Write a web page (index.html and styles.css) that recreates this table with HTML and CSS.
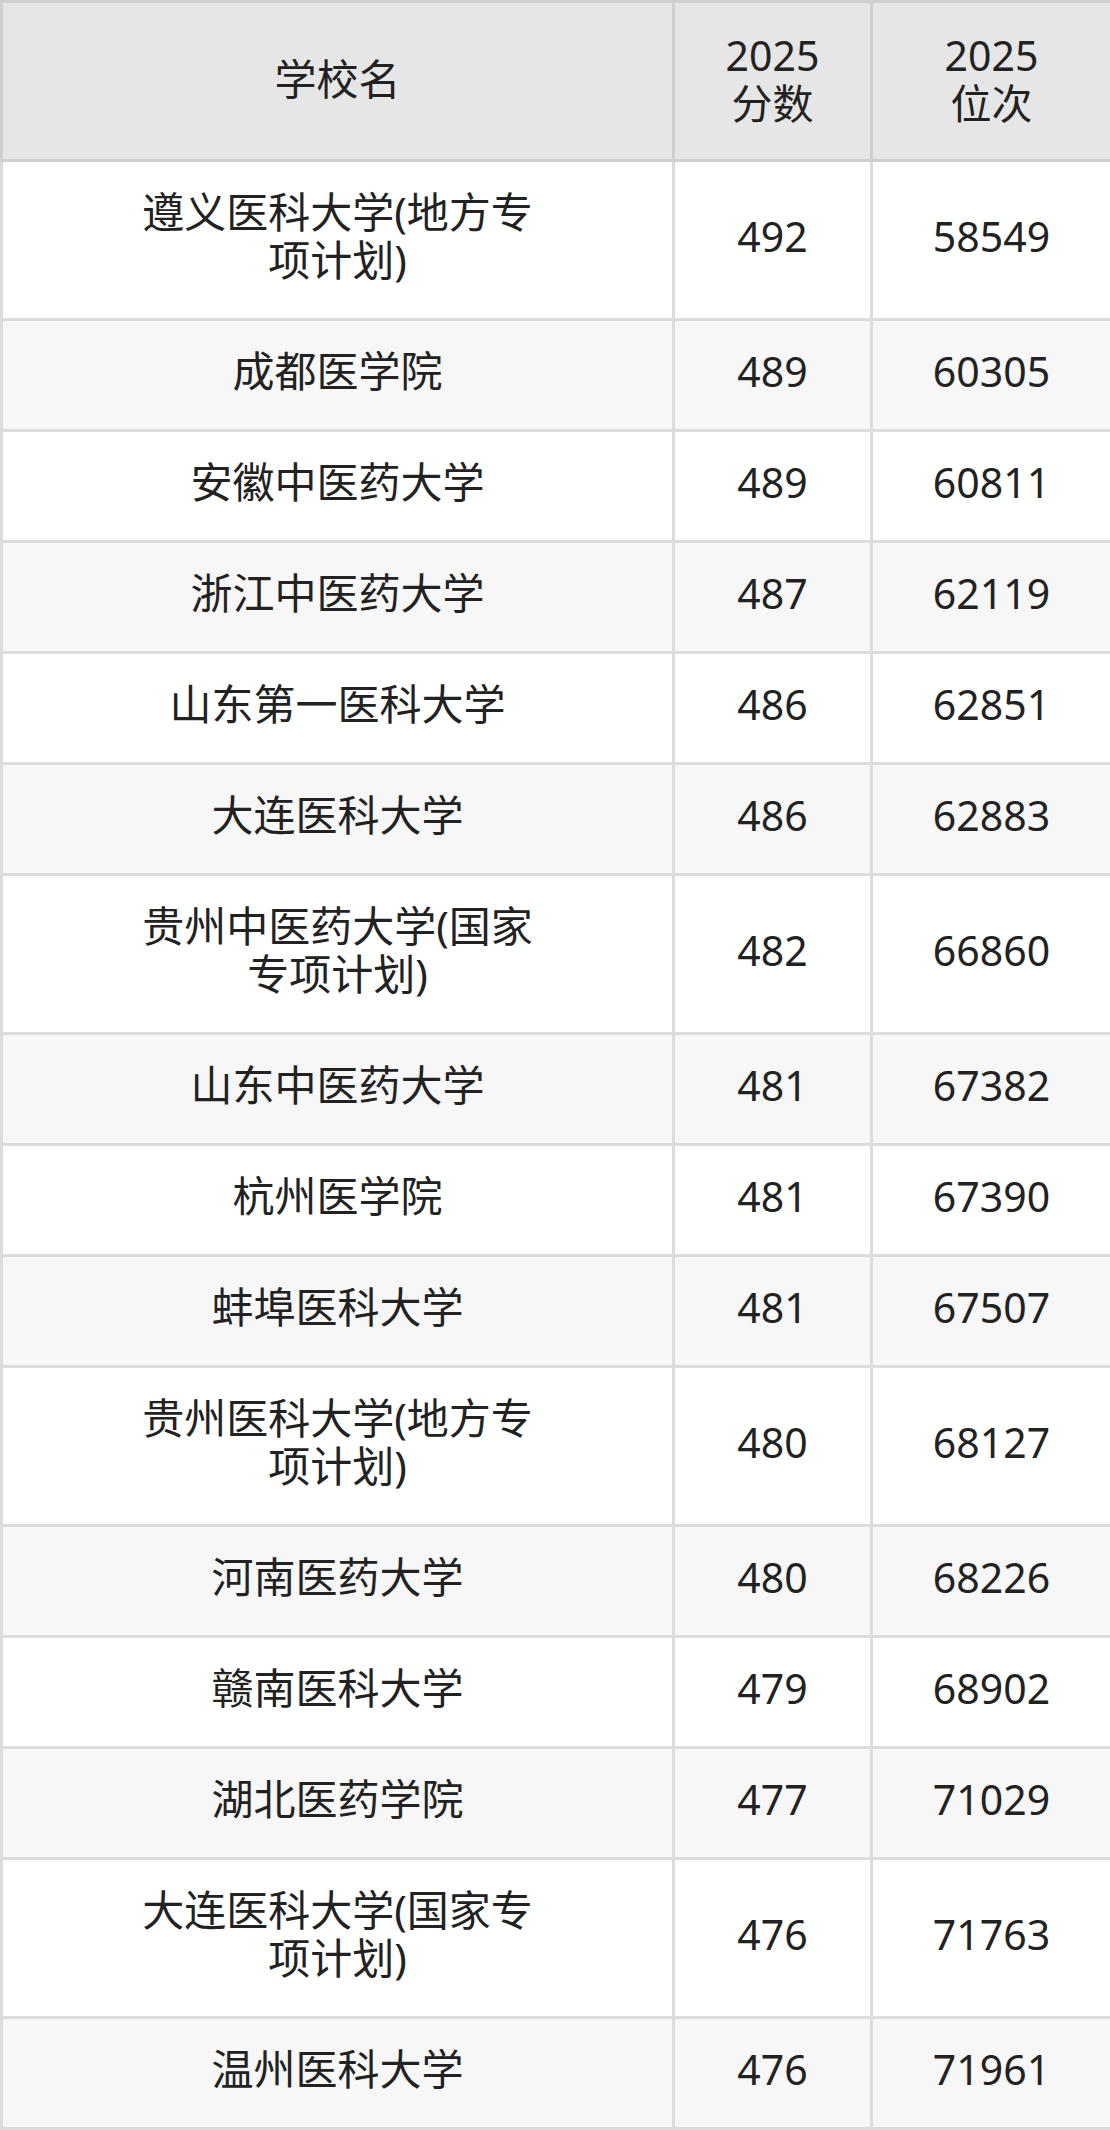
FILE: index.html
```html
<!DOCTYPE html>
<html lang="zh-CN">
<head>
<meta charset="utf-8">
<title>2025 分数位次</title>
<link rel="stylesheet" href="styles.css">
</head>
<body>
<table class="score-table">
  <colgroup>
    <col class="col-name">
    <col class="col-score">
    <col class="col-rank">
  </colgroup>
  <thead>
    <tr>
      <th class="name">学校名</th>
      <th class="num"><span class="line">2025</span><span class="line">分数</span></th>
      <th class="num"><span class="line">2025</span><span class="line">位次</span></th>
    </tr>
  </thead>
  <tbody>
    <tr><td class="name">遵义医科大学(地方专项计划)</td><td class="num">492</td><td class="num">58549</td></tr>
    <tr><td class="name">成都医学院</td><td class="num">489</td><td class="num">60305</td></tr>
    <tr><td class="name">安徽中医药大学</td><td class="num">489</td><td class="num">60811</td></tr>
    <tr><td class="name">浙江中医药大学</td><td class="num">487</td><td class="num">62119</td></tr>
    <tr><td class="name">山东第一医科大学</td><td class="num">486</td><td class="num">62851</td></tr>
    <tr><td class="name">大连医科大学</td><td class="num">486</td><td class="num">62883</td></tr>
    <tr><td class="name">贵州中医药大学(国家专项计划)</td><td class="num">482</td><td class="num">66860</td></tr>
    <tr><td class="name">山东中医药大学</td><td class="num">481</td><td class="num">67382</td></tr>
    <tr><td class="name">杭州医学院</td><td class="num">481</td><td class="num">67390</td></tr>
    <tr><td class="name">蚌埠医科大学</td><td class="num">481</td><td class="num">67507</td></tr>
    <tr><td class="name">贵州医科大学(地方专项计划)</td><td class="num">480</td><td class="num">68127</td></tr>
    <tr><td class="name">河南医药大学</td><td class="num">480</td><td class="num">68226</td></tr>
    <tr><td class="name">赣南医科大学</td><td class="num">479</td><td class="num">68902</td></tr>
    <tr><td class="name">湖北医药学院</td><td class="num">477</td><td class="num">71029</td></tr>
    <tr><td class="name">大连医科大学(国家专项计划)</td><td class="num">476</td><td class="num">71763</td></tr>
    <tr><td class="name">温州医科大学</td><td class="num">476</td><td class="num">71961</td></tr>
  </tbody>
</table>
</body>
</html>
```

FILE: styles.css
```css
html, body {
  margin: 0;
  padding: 0;
  background: #ffffff;
}

.score-table {
  width: 1110px;
  border-collapse: collapse;
  table-layout: fixed;
  font-family: "Noto Sans", "Noto Sans CJK SC", sans-serif;
  font-size: 42px;
  line-height: 48px;
  color: #222222;
  border: 3px solid #dcdcdc;
}

.col-name { width: 672px; }
.col-score { width: 198px; }
.col-rank { width: 240px; }

.score-table th,
.score-table td {
  text-align: center;
  vertical-align: middle;
  padding: 26px 8px 34px;
  font-weight: normal;
}

.score-table .num {
  font-size: 41px;
}

.score-table th {
  background: #e6e6e6;
  border: 3px solid #cfcfcf;
  padding-top: 28px;
  padding-bottom: 32px;
}

.score-table th .line {
  display: block;
  height: 48px;
}

.score-table td {
  border: 3px solid #dcdcdc;
}

.score-table td.name,
.score-table th.name {
  padding-left: 128px;
  padding-right: 128px;
}

.score-table tbody tr:nth-child(even) td {
  background: #f7f7f7;
}
```
